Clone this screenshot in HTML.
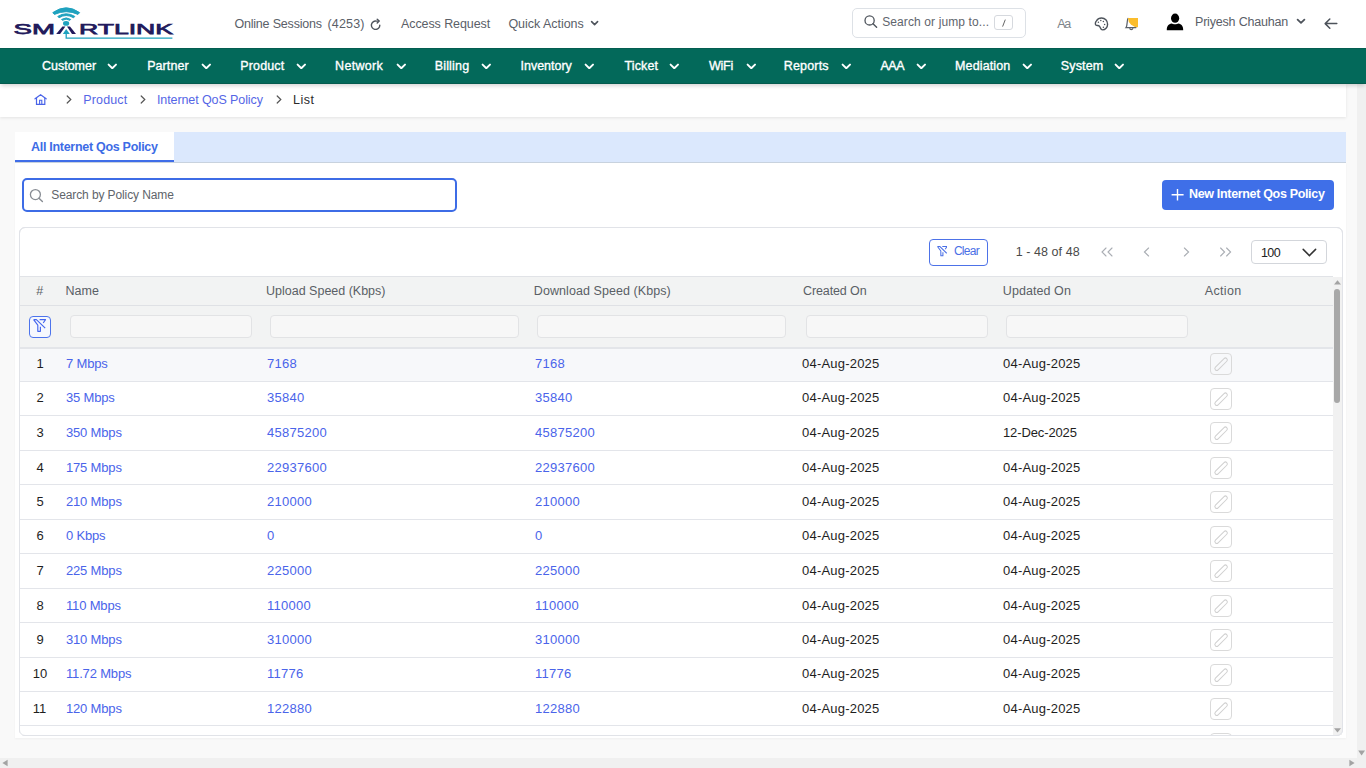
<!DOCTYPE html>
<html><head><meta charset="utf-8"><title>Internet QoS Policy - List</title>
<style>
html,body{margin:0;padding:0;width:1366px;height:768px;overflow:hidden;background:#f9f9f9;font-family:"Liberation Sans", sans-serif;}
.t{position:absolute;white-space:pre;line-height:20px;font-family:"Liberation Sans", sans-serif;}
.box,.ic{position:absolute;box-sizing:border-box;}
.d{font-size:13px}
.nm{letter-spacing:-0.17px}
.num{letter-spacing:0.27px}
.dt{letter-spacing:0.21px}
.lk{color:#4a64ea}
#header{position:absolute;left:0;top:0;width:1366px;height:48px;background:#fff}
#nav{position:absolute;left:0;top:48px;width:1366px;height:36px;background:#03695a;border-top:1px solid #045e51;border-bottom:1px solid #045b4e;box-sizing:border-box;box-shadow:0 3px 4px -1px rgba(0,0,0,0.16);z-index:2}
#crumb{position:absolute;left:0;top:84px;width:1346px;height:33px;background:#fff;box-shadow:0 1px 3px rgba(0,0,0,0.09)}
#tabbar{position:absolute;left:15px;top:132px;width:1331px;height:31px;background:#dbe8fd;border-bottom:1px solid #c8d2de;box-sizing:border-box}
#tab{position:absolute;left:15px;top:132px;width:159px;height:30px;background:#fff;border-bottom:2px solid #3f6de8;box-sizing:border-box}
#card{position:absolute;left:15px;top:163px;width:1331px;height:575px;background:#fff;box-shadow:0 1px 2px rgba(0,0,0,0.04)}
#search{position:absolute;left:22px;top:178px;width:435px;height:34px;border:2px solid #3d6ce6;border-radius:5px;box-sizing:border-box;background:#fff}
#newbtn{position:absolute;left:1162px;top:180px;width:172px;height:30px;background:#3f6fe8;border-radius:4px}
#tcard{position:absolute;left:19px;top:227px;width:1324px;height:509px;border:1px solid #e1e3e8;border-radius:6px;box-sizing:border-box;background:#fff;overflow:hidden}
#tclip{position:absolute;left:0;top:0;width:1342px;height:735px;overflow:hidden}
</style></head><body>
<div id="header"></div>

<svg class="ic" style="left:0px;top:0px" width="180" height="44" viewBox="0 0 180 44">
  <path d="M52.8,12.6 Q66.2,3.0 79.6,12.6 L78,14.4 Q66.2,9.0 54.4,14.4 Z" fill="#1fa2bf" stroke="#1fa2bf" stroke-width="1" stroke-linejoin="round"/>
  <path d="M57.8,16.4 Q66.2,11.2 74.8,16.4 L73.6,17.8 Q66.2,13.2 59,17.8 Z" fill="#1fa2bf" stroke="#1fa2bf" stroke-width="1" stroke-linejoin="round"/>
  <path d="M61.6,19.4 Q66.2,16.4 70.7,19.4 L69.9,20.3 Q66.2,18 62.4,20.3 Z" fill="#1fa2bf" stroke="#1fa2bf" stroke-width="1" stroke-linejoin="round"/>
  <ellipse cx="66.1" cy="23.4" rx="3.1" ry="2.4" fill="#1fa2bf"/>
  <text x="13.6" y="33.9" textLength="41.4" lengthAdjust="spacingAndGlyphs" font-family="Liberation Sans" font-weight="400" font-size="15.4" fill="#221a5c" stroke="#221a5c" stroke-width="0.75">SM</text>
  <text x="79" y="33.9" textLength="94" lengthAdjust="spacingAndGlyphs" font-family="Liberation Sans" font-weight="400" font-size="15.4" fill="#221a5c" stroke="#221a5c" stroke-width="0.75">RTLINK</text>
  <path d="M56.2,33.9 L60.1,33.9 L65.4,26.4 L62.4,26.4 Z" fill="#221a5c"/>
  <path d="M72,33.9 L76,33.9 L70,26.4 L67,26.4 Z" fill="#221a5c"/>
  <path d="M62.8,33.9 L66.2,29 L69.8,33.9 Z" fill="#1fa2bf"/>
  <path d="M66.2,33.5 L66.2,38.2 L172.4,38.2" fill="none" stroke="#1fa2bf" stroke-width="1.3"/>
</svg>
<svg class="ic" style="left:370px;top:18px" width="12" height="12" viewBox="0 0 12 12">
  <path d="M9.8,7.2 A4.2,4.2 0 1 1 6.4,3.1 L8.6,3.1" fill="none" stroke="#4d535b" stroke-width="1.4" stroke-linecap="round"/>
  <path d="M7.2,1.2 L9.2,3.1 L7.2,5" fill="none" stroke="#4d535b" stroke-width="1.4" stroke-linecap="round" stroke-linejoin="round"/>
</svg>
<div class="box" style="left:852px;top:8px;width:174px;height:30px;border:1px solid #dde1e6;border-radius:5px;background:#fff"></div>
<svg class="ic" style="left:864px;top:15px" width="14" height="13" viewBox="0 0 14 13">
  <circle cx="5.6" cy="5.4" r="4.6" fill="none" stroke="#4d535b" stroke-width="1.3"/>
  <path d="M9,8.8 L12.6,12.3" stroke="#4d535b" stroke-width="1.4" stroke-linecap="round"/>
</svg>
<div class="box" style="left:994px;top:15px;width:19px;height:15px;border:1px solid #d6d9de;border-radius:3px;background:#fff"></div>
<svg class="ic" style="left:999.5px;top:18px" width="8" height="10" viewBox="0 0 8 10"><path d="M2.6,8.6 L5.3,1.6" stroke="#666" stroke-width="1"/></svg>
<svg class="ic" style="left:1094px;top:17px" width="15" height="14" viewBox="0 0 15 14">
  <path d="M7.6,1 C11,1 13.6,3.8 13.6,7.3 C13.6,10.4 11.2,12.9 8.6,12.9 C6.4,12.9 6.6,10.8 5.6,9.4 C4.6,8.2 3,8.8 2,8.2 C0.8,7.4 1.4,5.2 2.4,3.8 C3.6,2 5.4,1 7.6,1 Z" fill="none" stroke="#4d535b" stroke-width="1.4"/>
  <circle cx="4.4" cy="5.2" r="0.75" fill="#4d535b"/><circle cx="6.8" cy="3.4" r="0.75" fill="#4d535b"/>
  <circle cx="9.4" cy="4.6" r="0.75" fill="#4d535b"/><circle cx="10.6" cy="7.4" r="0.75" fill="#4d535b"/>
  <circle cx="9.4" cy="10.2" r="0.75" fill="#4d535b"/>
</svg>
<svg class="ic" style="left:1124px;top:17px" width="15" height="14" viewBox="0 0 15 14">
  <path d="M4,1.5 C3,2.5 3.4,9 2,10.6 L12,10.6" fill="none" stroke="#5a6068" stroke-width="1.2" stroke-linecap="round"/>
  <path d="M5.6,11.3 C6.2,13 8.4,13 9,11.3" fill="none" stroke="#5a6068" stroke-width="1.2"/>
  <path d="M14,1 L4,1 A10,9.2 0 0 0 14,10.2 Z" fill="#fbbd2c"/>
</svg>
<svg class="ic" style="left:1166px;top:13px" width="18" height="18" viewBox="0 0 18 18">
  <ellipse cx="9.1" cy="5.2" rx="4.1" ry="4.6" fill="#000"/>
  <path d="M0.8,17.3 C0.6,13.4 2.6,11.2 5.6,10.6 C7,11.6 11,11.6 12.4,10.6 C15.4,11.2 17.4,13.4 17.2,17.3 Z" fill="#000"/>
</svg>
<svg class="ic" style="left:1324px;top:18px" width="14" height="12" viewBox="0 0 14 12">
  <path d="M12.8,5.6 L1.4,5.6 M5.8,1 L1.2,5.6 L5.8,10.2" fill="none" stroke="#4d535b" stroke-width="1.5" stroke-linecap="round" stroke-linejoin="round"/>
</svg>

<div id="nav"></div>
<div id="crumb"></div>

<svg class="ic" style="left:33px;top:93px" width="15" height="13" viewBox="0 0 15 13">
  <path d="M2,5.8 L7.6,1.7 L13.2,5.8" fill="none" stroke="#4a64e8" stroke-width="1.2" stroke-linecap="round" stroke-linejoin="round"/>
  <path d="M3.5,5 L3.5,11.4 L11.8,11.4 L11.8,5" fill="none" stroke="#4a64e8" stroke-width="1.2"/>
  <path d="M6.6,11.4 L6.6,7.2 L8.8,7.2 L8.8,11.4" fill="none" stroke="#4a64e8" stroke-width="1.1"/>
</svg>
<svg class="ic" style="left:65.5px;top:95px" width="7" height="9" viewBox="0 0 7 9"><polyline points="1.2,1 4.8,4.5 1.2,8" fill="none" stroke="#555" stroke-width="1.2" stroke-linecap="round"/></svg><svg class="ic" style="left:139.5px;top:95px" width="7" height="9" viewBox="0 0 7 9"><polyline points="1.2,1 4.8,4.5 1.2,8" fill="none" stroke="#555" stroke-width="1.2" stroke-linecap="round"/></svg><svg class="ic" style="left:275.5px;top:95px" width="7" height="9" viewBox="0 0 7 9"><polyline points="1.2,1 4.8,4.5 1.2,8" fill="none" stroke="#555" stroke-width="1.2" stroke-linecap="round"/></svg>
<div id="tabbar"></div>
<div id="tab"></div>
<div id="card"></div>
<div id="search"></div>
<div id="newbtn"></div>

<svg class="ic" style="left:1171px;top:187.5px" width="14" height="14" viewBox="0 0 14 14">
  <path d="M6.5,1 L6.5,12.6 M0.6,6.8 L12.6,6.8" stroke="#fff" stroke-width="1.4"/>
</svg>
<svg class="ic" style="left:20px;top:178px" width="0" height="0"></svg>
<svg class="ic" style="left:29px;top:188px" width="15" height="15" viewBox="0 0 15 15">
  <circle cx="6.4" cy="6.6" r="5" fill="none" stroke="#888d94" stroke-width="1.3"/>
  <path d="M10,10.2 L13.4,13.6" stroke="#888d94" stroke-width="1.4" stroke-linecap="round"/>
</svg>

<div id="tcard"></div>
<svg class="ic" style="left:936.6px;top:246.2px" width="10.4" height="10.4" viewBox="0 0 13 13"><path d="M0.6,0.6 L3.4,0.6 L12.2,9.2 M6.6,0.6 L12.6,0.6 L10.2,4 M0.6,0.6 L4.8,6.2 L4.8,12.3 L7.4,12.3 L7.4,7.8" fill="none" stroke="#4a6fe6" stroke-width="1.3" stroke-linejoin="round"/></svg>
<div class="box" style="left:929px;top:239px;width:59px;height:27px;border:1px solid #4d72e8;border-radius:4px"></div>
<svg class="ic" style="left:1100px;top:247px" width="140" height="11" viewBox="0 0 140 11">
 <g fill="none" stroke="#a9adb3" stroke-width="1.1" stroke-linecap="round">
  <polyline points="6,1 2,5 6,9"/><polyline points="12,1 8,5 12,9"/>
  <polyline points="48.6,1 44.4,5 48.6,9"/>
  <polyline points="84.4,1 88.6,5 84.4,9"/>
  <polyline points="120.6,1 124.6,5 120.6,9"/><polyline points="126.6,1 130.6,5 126.6,9"/>
 </g>
</svg>
<div class="box" style="left:1251px;top:240px;width:76px;height:24px;border:1px solid #d3d6db;border-radius:4px"></div>
<svg class="ic" style="left:1302px;top:248px" width="15" height="10" viewBox="0 0 15 10"><polyline points="1.2,1.4 7.4,7.6 13.6,1.4" fill="none" stroke="#333" stroke-width="1.5" stroke-linecap="round"/></svg>

<div id="tclip">
<div class="box" style="left:20px;top:276px;width:1313px;height:72px;background:#f2f3f3"></div><div class="box" style="left:20px;top:276px;width:1313px;height:1px;background:#e1e3e7"></div><div class="box" style="left:20px;top:305px;width:1313px;height:1px;background:#dfe1e5"></div><div class="box" style="left:20px;top:347px;width:1313px;height:2px;background:#e3e5e9"></div><div class="box" style="left:70px;top:315px;width:182px;height:23px;background:#f7f7f7;border:1px solid #e2e3e5;border-radius:4px"></div><div class="box" style="left:270px;top:315px;width:249px;height:23px;background:#f7f7f7;border:1px solid #e2e3e5;border-radius:4px"></div><div class="box" style="left:537px;top:315px;width:249px;height:23px;background:#f7f7f7;border:1px solid #e2e3e5;border-radius:4px"></div><div class="box" style="left:806px;top:315px;width:182px;height:23px;background:#f7f7f7;border:1px solid #e2e3e5;border-radius:4px"></div><div class="box" style="left:1006px;top:315px;width:182px;height:23px;background:#f7f7f7;border:1px solid #e2e3e5;border-radius:4px"></div><div class="box" style="left:29px;top:316px;width:22px;height:22px;border:1.3px solid #4d74ec;border-radius:4px;background:#f6f8fd"></div><svg class="ic" style="left:33px;top:318.8px" width="13.0" height="13.0" viewBox="0 0 13 13"><path d="M0.6,0.6 L3.4,0.6 L12.2,9.2 M6.6,0.6 L12.6,0.6 L10.2,4 M0.6,0.6 L4.8,6.2 L4.8,12.3 L7.4,12.3 L7.4,7.8" fill="none" stroke="#4466ee" stroke-width="1.15" stroke-linejoin="round"/></svg><div class="box" style="left:20px;top:349px;width:1313px;height:32px;background:#f7f8fa"></div><div class="box" style="left:20px;top:382px;width:1313px;height:33px;background:#ffffff"></div><div class="box" style="left:20px;top:416px;width:1313px;height:34px;background:#ffffff"></div><div class="box" style="left:20px;top:451px;width:1313px;height:33px;background:#ffffff"></div><div class="box" style="left:20px;top:485px;width:1313px;height:34px;background:#ffffff"></div><div class="box" style="left:20px;top:520px;width:1313px;height:33px;background:#ffffff"></div><div class="box" style="left:20px;top:554px;width:1313px;height:34px;background:#ffffff"></div><div class="box" style="left:20px;top:589px;width:1313px;height:33px;background:#ffffff"></div><div class="box" style="left:20px;top:623px;width:1313px;height:34px;background:#ffffff"></div><div class="box" style="left:20px;top:658px;width:1313px;height:33px;background:#ffffff"></div><div class="box" style="left:20px;top:692px;width:1313px;height:33px;background:#ffffff"></div><div class="box" style="left:20px;top:726px;width:1313px;height:34px;background:#ffffff"></div><div class="box" style="left:20px;top:381px;width:1313px;height:1px;background:#e3e5ea"></div><div class="box" style="left:20px;top:415px;width:1313px;height:1px;background:#e3e5ea"></div><div class="box" style="left:20px;top:450px;width:1313px;height:1px;background:#e3e5ea"></div><div class="box" style="left:20px;top:484px;width:1313px;height:1px;background:#e3e5ea"></div><div class="box" style="left:20px;top:519px;width:1313px;height:1px;background:#e3e5ea"></div><div class="box" style="left:20px;top:553px;width:1313px;height:1px;background:#e3e5ea"></div><div class="box" style="left:20px;top:588px;width:1313px;height:1px;background:#e3e5ea"></div><div class="box" style="left:20px;top:622px;width:1313px;height:1px;background:#e3e5ea"></div><div class="box" style="left:20px;top:657px;width:1313px;height:1px;background:#e3e5ea"></div><div class="box" style="left:20px;top:691px;width:1313px;height:1px;background:#e3e5ea"></div><div class="box" style="left:20px;top:725px;width:1313px;height:1px;background:#e3e5ea"></div><div class="box" style="left:1210px;top:353px;width:22px;height:22px;border:1px solid #dadada;border-radius:4px"></div><svg class="ic" style="left:1212px;top:355px" width="18" height="18" viewBox="0 0 18 18"><rect x="-1.9" y="-8" width="3.8" height="16" rx="1.9" transform="translate(9.1,9.2) rotate(45)" fill="none" stroke="#d0d0d0" stroke-width="1"/></svg><div class="box" style="left:1210px;top:388px;width:22px;height:22px;border:1px solid #dadada;border-radius:4px"></div><svg class="ic" style="left:1212px;top:390px" width="18" height="18" viewBox="0 0 18 18"><rect x="-1.9" y="-8" width="3.8" height="16" rx="1.9" transform="translate(9.1,9.2) rotate(45)" fill="none" stroke="#d0d0d0" stroke-width="1"/></svg><div class="box" style="left:1210px;top:422px;width:22px;height:22px;border:1px solid #dadada;border-radius:4px"></div><svg class="ic" style="left:1212px;top:424px" width="18" height="18" viewBox="0 0 18 18"><rect x="-1.9" y="-8" width="3.8" height="16" rx="1.9" transform="translate(9.1,9.2) rotate(45)" fill="none" stroke="#d0d0d0" stroke-width="1"/></svg><div class="box" style="left:1210px;top:457px;width:22px;height:22px;border:1px solid #dadada;border-radius:4px"></div><svg class="ic" style="left:1212px;top:459px" width="18" height="18" viewBox="0 0 18 18"><rect x="-1.9" y="-8" width="3.8" height="16" rx="1.9" transform="translate(9.1,9.2) rotate(45)" fill="none" stroke="#d0d0d0" stroke-width="1"/></svg><div class="box" style="left:1210px;top:491px;width:22px;height:22px;border:1px solid #dadada;border-radius:4px"></div><svg class="ic" style="left:1212px;top:493px" width="18" height="18" viewBox="0 0 18 18"><rect x="-1.9" y="-8" width="3.8" height="16" rx="1.9" transform="translate(9.1,9.2) rotate(45)" fill="none" stroke="#d0d0d0" stroke-width="1"/></svg><div class="box" style="left:1210px;top:526px;width:22px;height:22px;border:1px solid #dadada;border-radius:4px"></div><svg class="ic" style="left:1212px;top:528px" width="18" height="18" viewBox="0 0 18 18"><rect x="-1.9" y="-8" width="3.8" height="16" rx="1.9" transform="translate(9.1,9.2) rotate(45)" fill="none" stroke="#d0d0d0" stroke-width="1"/></svg><div class="box" style="left:1210px;top:560px;width:22px;height:22px;border:1px solid #dadada;border-radius:4px"></div><svg class="ic" style="left:1212px;top:562px" width="18" height="18" viewBox="0 0 18 18"><rect x="-1.9" y="-8" width="3.8" height="16" rx="1.9" transform="translate(9.1,9.2) rotate(45)" fill="none" stroke="#d0d0d0" stroke-width="1"/></svg><div class="box" style="left:1210px;top:595px;width:22px;height:22px;border:1px solid #dadada;border-radius:4px"></div><svg class="ic" style="left:1212px;top:597px" width="18" height="18" viewBox="0 0 18 18"><rect x="-1.9" y="-8" width="3.8" height="16" rx="1.9" transform="translate(9.1,9.2) rotate(45)" fill="none" stroke="#d0d0d0" stroke-width="1"/></svg><div class="box" style="left:1210px;top:629px;width:22px;height:22px;border:1px solid #dadada;border-radius:4px"></div><svg class="ic" style="left:1212px;top:631px" width="18" height="18" viewBox="0 0 18 18"><rect x="-1.9" y="-8" width="3.8" height="16" rx="1.9" transform="translate(9.1,9.2) rotate(45)" fill="none" stroke="#d0d0d0" stroke-width="1"/></svg><div class="box" style="left:1210px;top:664px;width:22px;height:22px;border:1px solid #dadada;border-radius:4px"></div><svg class="ic" style="left:1212px;top:666px" width="18" height="18" viewBox="0 0 18 18"><rect x="-1.9" y="-8" width="3.8" height="16" rx="1.9" transform="translate(9.1,9.2) rotate(45)" fill="none" stroke="#d0d0d0" stroke-width="1"/></svg><div class="box" style="left:1210px;top:698px;width:22px;height:22px;border:1px solid #dadada;border-radius:4px"></div><svg class="ic" style="left:1212px;top:700px" width="18" height="18" viewBox="0 0 18 18"><rect x="-1.9" y="-8" width="3.8" height="16" rx="1.9" transform="translate(9.1,9.2) rotate(45)" fill="none" stroke="#d0d0d0" stroke-width="1"/></svg><div class="box" style="left:1210px;top:733px;width:22px;height:22px;border:1px solid #dadada;border-radius:4px"></div><svg class="ic" style="left:1212px;top:735px" width="18" height="18" viewBox="0 0 18 18"><rect x="-1.9" y="-8" width="3.8" height="16" rx="1.9" transform="translate(9.1,9.2) rotate(45)" fill="none" stroke="#d0d0d0" stroke-width="1"/></svg><span class="t d" style="left:36.5px;top:354px;color:#1e1e1e">1</span><span class="t d lk nm" style="left:66px;top:354px">7 Mbps</span><span class="t d lk num" style="left:267px;top:354px">7168</span><span class="t d lk num" style="left:535px;top:354px">7168</span><span class="t d dt" style="left:802px;top:354px;color:#1e1e1e">04-Aug-2025</span><span class="t d dt" style="left:1003px;top:354px;color:#1e1e1e">04-Aug-2025</span><span class="t d" style="left:36.5px;top:388px;color:#1e1e1e">2</span><span class="t d lk nm" style="left:66px;top:388px">35 Mbps</span><span class="t d lk num" style="left:267px;top:388px">35840</span><span class="t d lk num" style="left:535px;top:388px">35840</span><span class="t d dt" style="left:802px;top:388px;color:#1e1e1e">04-Aug-2025</span><span class="t d dt" style="left:1003px;top:388px;color:#1e1e1e">04-Aug-2025</span><span class="t d" style="left:36.5px;top:423px;color:#1e1e1e">3</span><span class="t d lk nm" style="left:66px;top:423px">350 Mbps</span><span class="t d lk num" style="left:267px;top:423px">45875200</span><span class="t d lk num" style="left:535px;top:423px">45875200</span><span class="t d dt" style="left:802px;top:423px;color:#1e1e1e">04-Aug-2025</span><span class="t d dt" style="left:1003px;top:423px;color:#1e1e1e;letter-spacing:-0.12px">12-Dec-2025</span><span class="t d" style="left:36.5px;top:458px;color:#1e1e1e">4</span><span class="t d lk nm" style="left:66px;top:458px">175 Mbps</span><span class="t d lk num" style="left:267px;top:458px">22937600</span><span class="t d lk num" style="left:535px;top:458px">22937600</span><span class="t d dt" style="left:802px;top:458px;color:#1e1e1e">04-Aug-2025</span><span class="t d dt" style="left:1003px;top:458px;color:#1e1e1e">04-Aug-2025</span><span class="t d" style="left:36.5px;top:492px;color:#1e1e1e">5</span><span class="t d lk nm" style="left:66px;top:492px">210 Mbps</span><span class="t d lk num" style="left:267px;top:492px">210000</span><span class="t d lk num" style="left:535px;top:492px">210000</span><span class="t d dt" style="left:802px;top:492px;color:#1e1e1e">04-Aug-2025</span><span class="t d dt" style="left:1003px;top:492px;color:#1e1e1e">04-Aug-2025</span><span class="t d" style="left:36.5px;top:526px;color:#1e1e1e">6</span><span class="t d lk nm" style="left:66px;top:526px">0 Kbps</span><span class="t d lk num" style="left:267px;top:526px">0</span><span class="t d lk num" style="left:535px;top:526px">0</span><span class="t d dt" style="left:802px;top:526px;color:#1e1e1e">04-Aug-2025</span><span class="t d dt" style="left:1003px;top:526px;color:#1e1e1e">04-Aug-2025</span><span class="t d" style="left:36.5px;top:561px;color:#1e1e1e">7</span><span class="t d lk nm" style="left:66px;top:561px">225 Mbps</span><span class="t d lk num" style="left:267px;top:561px">225000</span><span class="t d lk num" style="left:535px;top:561px">225000</span><span class="t d dt" style="left:802px;top:561px;color:#1e1e1e">04-Aug-2025</span><span class="t d dt" style="left:1003px;top:561px;color:#1e1e1e">04-Aug-2025</span><span class="t d" style="left:36.5px;top:596px;color:#1e1e1e">8</span><span class="t d lk nm" style="left:66px;top:596px">110 Mbps</span><span class="t d lk num" style="left:267px;top:596px">110000</span><span class="t d lk num" style="left:535px;top:596px">110000</span><span class="t d dt" style="left:802px;top:596px;color:#1e1e1e">04-Aug-2025</span><span class="t d dt" style="left:1003px;top:596px;color:#1e1e1e">04-Aug-2025</span><span class="t d" style="left:36.5px;top:630px;color:#1e1e1e">9</span><span class="t d lk nm" style="left:66px;top:630px">310 Mbps</span><span class="t d lk num" style="left:267px;top:630px">310000</span><span class="t d lk num" style="left:535px;top:630px">310000</span><span class="t d dt" style="left:802px;top:630px;color:#1e1e1e">04-Aug-2025</span><span class="t d dt" style="left:1003px;top:630px;color:#1e1e1e">04-Aug-2025</span><span class="t d" style="left:32.7px;top:664px;color:#1e1e1e">10</span><span class="t d lk nm" style="left:66px;top:664px">11.72 Mbps</span><span class="t d lk num" style="left:267px;top:664px">11776</span><span class="t d lk num" style="left:535px;top:664px">11776</span><span class="t d dt" style="left:802px;top:664px;color:#1e1e1e">04-Aug-2025</span><span class="t d dt" style="left:1003px;top:664px;color:#1e1e1e">04-Aug-2025</span><span class="t d" style="left:32.7px;top:699px;color:#1e1e1e">11</span><span class="t d lk nm" style="left:66px;top:699px">120 Mbps</span><span class="t d lk num" style="left:267px;top:699px">122880</span><span class="t d lk num" style="left:535px;top:699px">122880</span><span class="t d dt" style="left:802px;top:699px;color:#1e1e1e">04-Aug-2025</span><span class="t d dt" style="left:1003px;top:699px;color:#1e1e1e">04-Aug-2025</span>

<div class="box" style="left:1333px;top:277px;width:9px;height:458px;background:#f1f1f1"></div>
<svg class="ic" style="left:1333px;top:279px" width="9" height="7" viewBox="0 0 9 7"><path d="M1,5.6 L4.5,1.2 L8,5.6 Z" fill="#a3a3a3"/></svg>
<div class="box" style="left:1334px;top:289px;width:6px;height:114px;background:#a8a8a8;border-radius:3px"></div>
<svg class="ic" style="left:1333px;top:727px" width="9" height="7" viewBox="0 0 9 7"><path d="M1,1.2 L4.5,5.6 L8,1.2 Z" fill="#a3a3a3"/></svg>

</div>
<div class="box" style="left:19px;top:227px;width:1324px;height:509px;border:1px solid #e1e3e8;border-radius:6px"></div>

<div class="box" style="left:1357px;top:84px;width:9px;height:684px;background:#f0f0f0"></div>
<svg class="ic" style="left:1357px;top:749px" width="9" height="8" viewBox="0 0 9 8"><path d="M1.2,1.4 L4.6,6.6 L8,1.4 Z" fill="#a3a3a3"/></svg>
<div class="box" style="left:0px;top:758px;width:1366px;height:10px;background:#f0f0f0"></div>
<svg class="ic" style="left:1px;top:759px" width="8" height="8" viewBox="0 0 8 8"><path d="M6.6,0.8 L1.4,4 L6.6,7.2 Z" fill="#a3a3a3"/></svg>
<svg class="ic" style="left:1348px;top:759px" width="8" height="8" viewBox="0 0 8 8"><path d="M1.4,0.8 L6.6,4 L1.4,7.2 Z" fill="#a3a3a3"/></svg>

<div style="position:absolute;left:0;top:0;z-index:3"><svg class="ic" style="left:107.39999999999999px;top:62.5px" width="10.6" height="6.8" viewBox="-1 -1 10.6 6.8"><polyline points="0.6,0.6 4.3,4.2 8.0,0.6" fill="none" stroke="#ffffff" stroke-width="1.9" stroke-linecap="round" stroke-linejoin="round"/></svg><svg class="ic" style="left:200.60000000000002px;top:62.5px" width="10.6" height="6.8" viewBox="-1 -1 10.6 6.8"><polyline points="0.6,0.6 4.3,4.2 8.0,0.6" fill="none" stroke="#ffffff" stroke-width="1.9" stroke-linecap="round" stroke-linejoin="round"/></svg><svg class="ic" style="left:295.7px;top:62.5px" width="10.6" height="6.8" viewBox="-1 -1 10.6 6.8"><polyline points="0.6,0.6 4.3,4.2 8.0,0.6" fill="none" stroke="#ffffff" stroke-width="1.9" stroke-linecap="round" stroke-linejoin="round"/></svg><svg class="ic" style="left:395.5px;top:62.5px" width="10.6" height="6.8" viewBox="-1 -1 10.6 6.8"><polyline points="0.6,0.6 4.3,4.2 8.0,0.6" fill="none" stroke="#ffffff" stroke-width="1.9" stroke-linecap="round" stroke-linejoin="round"/></svg><svg class="ic" style="left:481.3px;top:62.5px" width="10.6" height="6.8" viewBox="-1 -1 10.6 6.8"><polyline points="0.6,0.6 4.3,4.2 8.0,0.6" fill="none" stroke="#ffffff" stroke-width="1.9" stroke-linecap="round" stroke-linejoin="round"/></svg><svg class="ic" style="left:583.8px;top:62.5px" width="10.6" height="6.8" viewBox="-1 -1 10.6 6.8"><polyline points="0.6,0.6 4.3,4.2 8.0,0.6" fill="none" stroke="#ffffff" stroke-width="1.9" stroke-linecap="round" stroke-linejoin="round"/></svg><svg class="ic" style="left:669.3px;top:62.5px" width="10.6" height="6.8" viewBox="-1 -1 10.6 6.8"><polyline points="0.6,0.6 4.3,4.2 8.0,0.6" fill="none" stroke="#ffffff" stroke-width="1.9" stroke-linecap="round" stroke-linejoin="round"/></svg><svg class="ic" style="left:745.5px;top:62.5px" width="10.6" height="6.8" viewBox="-1 -1 10.6 6.8"><polyline points="0.6,0.6 4.3,4.2 8.0,0.6" fill="none" stroke="#ffffff" stroke-width="1.9" stroke-linecap="round" stroke-linejoin="round"/></svg><svg class="ic" style="left:840.5px;top:62.5px" width="10.6" height="6.8" viewBox="-1 -1 10.6 6.8"><polyline points="0.6,0.6 4.3,4.2 8.0,0.6" fill="none" stroke="#ffffff" stroke-width="1.9" stroke-linecap="round" stroke-linejoin="round"/></svg><svg class="ic" style="left:915.5px;top:62.5px" width="10.6" height="6.8" viewBox="-1 -1 10.6 6.8"><polyline points="0.6,0.6 4.3,4.2 8.0,0.6" fill="none" stroke="#ffffff" stroke-width="1.9" stroke-linecap="round" stroke-linejoin="round"/></svg><svg class="ic" style="left:1021.8px;top:62.5px" width="10.6" height="6.8" viewBox="-1 -1 10.6 6.8"><polyline points="0.6,0.6 4.3,4.2 8.0,0.6" fill="none" stroke="#ffffff" stroke-width="1.9" stroke-linecap="round" stroke-linejoin="round"/></svg><svg class="ic" style="left:1114.3px;top:62.5px" width="10.6" height="6.8" viewBox="-1 -1 10.6 6.8"><polyline points="0.6,0.6 4.3,4.2 8.0,0.6" fill="none" stroke="#ffffff" stroke-width="1.9" stroke-linecap="round" stroke-linejoin="round"/></svg><svg class="ic" style="left:589.5px;top:20px" width="9.2" height="6.2" viewBox="-1 -1 9.2 6.2"><polyline points="0.6,0.6 3.6,3.6 6.6000000000000005,0.6" fill="none" stroke="#4d535b" stroke-width="1.6" stroke-linecap="round" stroke-linejoin="round"/></svg><svg class="ic" style="left:1296px;top:18.4px" width="10" height="6.4" viewBox="-1 -1 10 6.4"><polyline points="0.6,0.6 4.0,3.8000000000000003 7.4,0.6" fill="none" stroke="#4d535b" stroke-width="1.8" stroke-linecap="round" stroke-linejoin="round"/></svg><span class="t" style="left:234.4px;top:14px;font-size:12.5px;font-weight:400;color:#5a6068;letter-spacing:-0.19px;">Online Sessions</span><span class="t" style="left:327.5px;top:14px;font-size:12.5px;font-weight:400;color:#5a6068;letter-spacing:0.18px;">(4253)</span><span class="t" style="left:401.0px;top:14px;font-size:12.5px;font-weight:400;color:#5a6068;letter-spacing:-0.09px;">Access Request</span><span class="t" style="left:508.4px;top:14px;font-size:12.5px;font-weight:400;color:#5a6068;letter-spacing:-0.03px;">Quick Actions</span><span class="t" style="left:882.2px;top:12px;font-size:12px;font-weight:400;color:#5f656d;letter-spacing:0.11px;">Search or jump to...</span><span class="t" style="left:1057.3px;top:14px;font-size:12.5px;font-weight:400;color:#80858b;letter-spacing:-1.30px;">Aa</span><span class="t" style="left:1195.0px;top:12px;font-size:12.5px;font-weight:400;color:#5a6068;letter-spacing:-0.19px;">Priyesh Chauhan</span><span class="t" style="left:42.1px;top:56px;font-size:12.5px;font-weight:400;color:#ffffff;letter-spacing:-0.03px;-webkit-text-stroke:0.35px #fff;">Customer</span><span class="t" style="left:147.2px;top:56px;font-size:12.5px;font-weight:400;color:#ffffff;letter-spacing:0.07px;-webkit-text-stroke:0.35px #fff;">Partner</span><span class="t" style="left:240.3px;top:56px;font-size:12.5px;font-weight:400;color:#ffffff;letter-spacing:0.13px;-webkit-text-stroke:0.35px #fff;">Product</span><span class="t" style="left:335.1px;top:56px;font-size:12.5px;font-weight:400;color:#ffffff;letter-spacing:0.32px;-webkit-text-stroke:0.35px #fff;">Network</span><span class="t" style="left:434.7px;top:56px;font-size:12.5px;font-weight:400;color:#ffffff;letter-spacing:0.18px;-webkit-text-stroke:0.35px #fff;">Billing</span><span class="t" style="left:520.5px;top:56px;font-size:12.5px;font-weight:400;color:#ffffff;letter-spacing:-0.01px;-webkit-text-stroke:0.35px #fff;">Inventory</span><span class="t" style="left:624.5px;top:56px;font-size:12.5px;font-weight:400;color:#ffffff;letter-spacing:0.14px;-webkit-text-stroke:0.35px #fff;">Ticket</span><span class="t" style="left:709.0px;top:56px;font-size:12.5px;font-weight:400;color:#ffffff;letter-spacing:-0.27px;-webkit-text-stroke:0.35px #fff;">WiFi</span><span class="t" style="left:783.7px;top:56px;font-size:12.5px;font-weight:400;color:#ffffff;letter-spacing:0.18px;-webkit-text-stroke:0.35px #fff;">Reports</span><span class="t" style="left:880.4px;top:56px;font-size:12.5px;font-weight:400;color:#ffffff;letter-spacing:-0.45px;-webkit-text-stroke:0.35px #fff;">AAA</span><span class="t" style="left:955.0px;top:56px;font-size:12.5px;font-weight:400;color:#ffffff;letter-spacing:0.14px;-webkit-text-stroke:0.35px #fff;">Mediation</span><span class="t" style="left:1060.7px;top:56px;font-size:12.5px;font-weight:400;color:#ffffff;letter-spacing:0.18px;-webkit-text-stroke:0.35px #fff;">System</span><span class="t" style="left:83.3px;top:90px;font-size:12.5px;font-weight:400;color:#5566e6;letter-spacing:0.13px;">Product</span><span class="t" style="left:156.9px;top:90px;font-size:12.5px;font-weight:400;color:#5566e6;letter-spacing:-0.09px;">Internet QoS Policy</span><span class="t" style="left:293.0px;top:90px;font-size:12.5px;font-weight:400;color:#2b2b2b;letter-spacing:0.50px;">List</span><span class="t" style="left:31.0px;top:137px;font-size:12.5px;font-weight:700;color:#3d6ce6;letter-spacing:-0.29px;">All Internet Qos Policy</span><span class="t" style="left:51.3px;top:185px;font-size:12px;font-weight:400;color:#60646a;letter-spacing:-0.11px;">Search by Policy Name</span><span class="t" style="left:1189.0px;top:184px;font-size:12.5px;font-weight:700;color:#ffffff;letter-spacing:-0.33px;">New Internet Qos Policy</span><span class="t" style="left:953.9px;top:241px;font-size:12px;font-weight:400;color:#4a6fe6;letter-spacing:-0.72px;">Clear</span><span class="t" style="left:1015.8px;top:242px;font-size:12.5px;font-weight:400;color:#4a4a4a;letter-spacing:0.05px;">1 - 48 of 48</span><span class="t" style="left:1260.9px;top:243px;font-size:12.5px;font-weight:400;color:#222;letter-spacing:-0.50px;">100</span><span class="t" style="left:36.3px;top:281px;font-size:12.5px;font-weight:400;color:#5a5f66;letter-spacing:0.00px;">#</span><span class="t" style="left:65.6px;top:281px;font-size:12.5px;font-weight:400;color:#5a5f66;letter-spacing:-0.03px;">Name</span><span class="t" style="left:266.1px;top:281px;font-size:12.5px;font-weight:400;color:#5a5f66;letter-spacing:-0.01px;">Upload Speed (Kbps)</span><span class="t" style="left:533.8px;top:281px;font-size:12.5px;font-weight:400;color:#5a5f66;letter-spacing:0.07px;">Download Speed (Kbps)</span><span class="t" style="left:803.0px;top:281px;font-size:12.5px;font-weight:400;color:#5a5f66;letter-spacing:-0.11px;">Created On</span><span class="t" style="left:1002.8px;top:281px;font-size:12.5px;font-weight:400;color:#5a5f66;letter-spacing:0.07px;">Updated On</span><span class="t" style="left:1204.7px;top:281px;font-size:12.5px;font-weight:400;color:#5a5f66;letter-spacing:0.36px;">Action</span></div>
</body></html>
